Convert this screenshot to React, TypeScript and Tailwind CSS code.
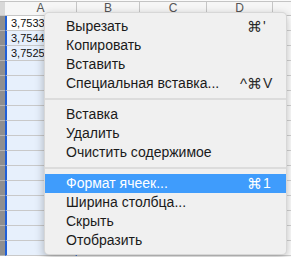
import React from "react";

const values = ["3,7533", "3,7544", "3,7525"];
const rows = Array.from({ length: 16 }, (_, i) => values[i] ?? "");

type Item = { label: string; mod?: string; key?: string; active?: boolean };

const groups: Item[][] = [
  [
    { label: "Вырезать", mod: "⌘", key: "'" },
    { label: "Копировать" },
    { label: "Вставить" },
    { label: "Специальная вставка...", mod: "^⌘", key: "V" },
  ],
  [{ label: "Вставка" }, { label: "Удалить" }, { label: "Очистить содержимое" }],
  [
    { label: "Формат ячеек...", mod: "⌘", key: "1", active: true },
    { label: "Ширина столбца..." },
    { label: "Скрыть" },
    { label: "Отобразить" },
  ],
];

function MenuRow({ item }: { item: Item }) {
  return (
    <div
      className={
        item.active
          ? "flex items-center h-[19px] pl-[21px] pr-[11px] bg-[#3f9cfc] text-white"
          : "flex items-center h-[19px] pl-[21px] pr-[11px] text-[#1a1a1a]"
      }
    >
      <span className="flex-1 whitespace-nowrap">{item.label}</span>
      {item.mod && (
        <span className={item.active ? "text-right text-[15px] text-white" : "text-right text-[15px] text-[#2a2a2a]"}>
          {item.mod}
        </span>
      )}
      {item.mod && (
        <span className={item.active ? "w-[13px] pl-[1px] text-white" : "w-[13px] pl-[1px] text-[#2a2a2a]"}>
          {item.key}
        </span>
      )}
    </div>
  );
}

export default function App() {
  return (
    <div
      className="relative w-[291px] h-[257px] overflow-hidden bg-white"
      style={{ fontFamily: '"Liberation Sans", "DejaVu Sans", sans-serif' }}
    >
      {/* sheet */}
      <div className="flex flex-col">
        <div className="h-[2px] bg-[#fafafa] border-b border-[#c4c4c4]" />
        <div className="flex h-[14px] bg-[#f6f6f6] border-b border-[#c6c6c6] text-[12px] leading-[12px] text-[#555]">
          <div className="w-[5px] bg-[#d8d8d8]" />
          <div className="w-[72px] flex items-end justify-center pb-[1px] border-r border-[#c6c6c6]">A</div>
          <div className="w-[63px] flex items-end justify-center pb-[1px] border-r border-[#c6c6c6]">B</div>
          <div className="w-[67px] flex items-end justify-center pb-[1px] border-r border-[#c6c6c6]">C</div>
          <div className="w-[66px] flex items-end justify-center pb-[1px] border-r border-[#c6c6c6]">D</div>
          <div className="flex-1" />
        </div>
        {rows.map((v, i) => (
          <div key={i} className="flex h-[15px] text-[11px] leading-[14px] text-[#111]">
            <div className="w-[5px] bg-[#8f8f8f] border-b border-[#b4b4b4]" />
            <div
              className={
                i === 0
                  ? "w-[72px] bg-white border-l-2 border-r-2 border-l-[#1f5fd6] border-r-[#1f5fd6] border-b border-b-[#c9c9c9] pl-[4px]"
                  : "w-[72px] bg-[#e7f0fc] border-l-2 border-r-2 border-l-[#1f5fd6] border-r-[#1f5fd6] border-b border-b-[#c9c9c9] pl-[4px]"
              }
            >
              {v}
            </div>
            <div className="w-[63px] border-r border-b border-[#d4d4d4]" />
            <div className="w-[67px] border-r border-b border-[#d4d4d4]" />
            <div className="w-[66px] border-r border-b border-[#d4d4d4]" />
            <div className="flex-1 border-b border-[#d4d4d4]" />
          </div>
        ))}
      </div>

      {/* context menu */}
      <div className="absolute left-[44px] top-[12px] w-[243px] py-[4px] rounded-[5px] bg-[#f0f0f0] border border-black/10 shadow-[0_3px_10px_rgba(0,0,0,0.28)] text-[14px] leading-[19px]">
        {groups.map((g, gi) => (
          <div key={gi}>
            {gi > 0 && (
              <div className="h-[12px] flex items-center">
                <div className="w-full h-[2px] bg-[#dcdcdc]" />
              </div>
            )}
            {g.map((item) => (
              <MenuRow key={item.label} item={item} />
            ))}
          </div>
        ))}
      </div>
    </div>
  );
}
